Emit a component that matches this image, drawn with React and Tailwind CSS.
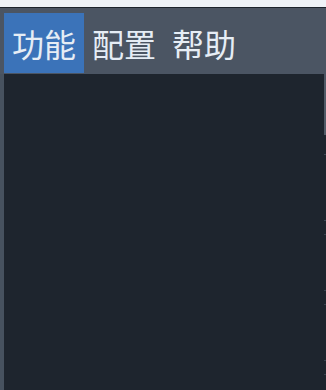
export default function App() {
  const menus = ['功能', '配置', '帮助']

  return (
    <div
      className="relative h-[390px] w-[326px] overflow-hidden bg-[#47525f] flex flex-col"
      style={{ fontFamily: '"Noto Sans", "Noto Sans CJK SC", sans-serif' }}
    >
      {/* window top strip */}
      <div className="h-[7px] bg-[#eef2f7]" />
      <div className="h-px bg-[#1c232c]" />

      {/* menu bar */}
      <div className="h-[66px] bg-[#4b5563] pl-[4px] pt-[5px] flex items-start">
        {menus.map((m, i) => (
          <div
            key={m}
            className={
              'h-[60px] px-[8px] pt-[3px] flex items-center text-[32px] leading-none text-[#e6edf5] ' +
              (i === 0 ? 'bg-[#3b73b9]' : '')
            }
          >
            {m}
          </div>
        ))}
      </div>

      {/* underlying page */}
      <div className="flex-1 flex">
        <div className="w-[4px] bg-[#47525f]" />
        <div className="flex-1 bg-[#1e252e]" />
        <div className="w-[2px] flex flex-col bg-[#1e252e]">
          <div className="h-[6px] bg-[#4b5563]" />
          <div className="h-[55px] bg-[#515b67]" />
          <div className="h-[19px]" />
          <div className="h-px bg-[#3f4a57]" />
          <div className="h-[65px]" />
          <div className="h-px bg-[#3f4a57]" />
          <div className="h-[13px]" />
          <div className="h-px bg-[#3a4450]" />
          <div className="h-[55px]" />
          <div className="h-px bg-[#3a4450]" />
          <div className="h-[13px]" />
          <div className="h-px bg-[#3a4450]" />
          <div className="h-[55px]" />
          <div className="h-px bg-[#3a4450]" />
          <div className="h-[13px]" />
          <div className="h-px bg-[#3a4450]" />
        </div>
      </div>

      {/* open dropdown for 功能 */}
      <div className="absolute left-[4px] top-[74px] bottom-0 w-[320px] bg-[#1e252e]" />
    </div>
  )
}
